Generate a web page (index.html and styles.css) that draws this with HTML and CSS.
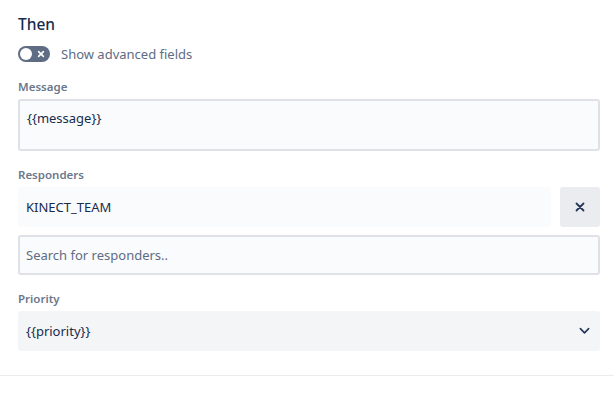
FILE: index.html
```html
<!DOCTYPE html>
<html lang="en">
<head>
  <meta charset="UTF-8" />
  <meta name="viewport" content="width=device-width, initial-scale=1.0" />
  <title>Then — action fields</title>
  <link rel="stylesheet" href="styles.css">
</head>
<body>
  <div class="panel">
    <h2 class="heading">Then</h2>

    <label class="toggle-row">
      <span class="toggle">
        <span class="toggle-knob"></span>
        <svg class="toggle-x" viewBox="0 0 10 10" xmlns="http://www.w3.org/2000/svg">
          <path d="M2 2l6 6M8 2l-6 6" stroke="#fff" stroke-width="2" stroke-linecap="round"/>
        </svg>
      </span>
      <span class="toggle-label">Show advanced fields</span>
    </label>

    <div class="field">
      <div class="field-label">Message</div>
      <div class="textarea">{{message}}</div>
    </div>

    <div class="field">
      <div class="field-label">Responders</div>
      <div class="responder-row">
        <div class="responder">KINECT_TEAM</div>
        <button class="icon-btn" aria-label="remove">
          <svg viewBox="0 0 12 12" xmlns="http://www.w3.org/2000/svg">
            <path d="M2.5 2.5l7 7M9.5 2.5l-7 7" stroke="#253858" stroke-width="1.8" stroke-linecap="round"/>
          </svg>
        </button>
      </div>
      <div class="search">Search for responders..</div>
    </div>

    <div class="field">
      <div class="field-label">Priority</div>
      <div class="select">
        <span>{{priority}}</span>
        <svg class="chevron" viewBox="0 0 12 8" xmlns="http://www.w3.org/2000/svg">
          <path d="M1.5 1.5l4.5 4.5 4.5-4.5" stroke="#253858" stroke-width="1.8" fill="none" stroke-linecap="round" stroke-linejoin="round"/>
        </svg>
      </div>
    </div>
  </div>
  <div class="divider"></div>
</body>
</html>
```

FILE: styles.css
```css
:root {
  --text: #172b4d;
  --subtle: #6b778c;
  --field: #fafbfc;
  --field-dark: #f4f5f7;
  --border: #dfe1e6;
}

html, body {
  margin: 0;
  padding: 0;
  background: #fff;
  color: var(--text);
  font-family: "Noto Sans", "Open Sans", sans-serif;
  font-size: 13px;
}

.panel {
  padding: 14px 14px 0 18px;
}

.heading {
  margin: 0;
  font-size: 15.5px;
  line-height: 20px;
  font-weight: 500;
}

/* Toggle */
.toggle-row {
  display: flex;
  align-items: center;
  gap: 11px;
  margin-top: 12px;
  height: 16px;
}
.toggle {
  position: relative;
  width: 32px;
  height: 16px;
  border-radius: 8px;
  background: #5e6c84;
  display: block;
}
.toggle-knob {
  position: absolute;
  left: 2px;
  top: 2px;
  width: 12px;
  height: 12px;
  border-radius: 50%;
  background: #fff;
}
.toggle-x {
  position: absolute;
  right: 5px;
  top: 4px;
  width: 8px;
  height: 8px;
}
.toggle-label {
  color: #5e6c84;
  font-size: 13px;
  line-height: 16px;
}

/* Fields */
.field {
  margin-top: 16px;
}
.field:first-of-type {
  margin-top: 17px;
}
.field-label {
  font-size: 11.5px;
  line-height: 16px;
  font-weight: 600;
  color: var(--subtle);
  margin-bottom: 4px;
}

.textarea {
  box-sizing: border-box;
  height: 52px;
  border: 2px solid var(--border);
  border-radius: 3px;
  background: var(--field);
  padding: 7px 7px;
  line-height: 20px;
}

.responder-row {
  display: flex;
  gap: 9px;
}
.responder {
  flex: 1;
  height: 40px;
  box-sizing: border-box;
  background: var(--field);
  border-radius: 3px;
  padding: 0 8px;
  display: flex;
  align-items: center;
}
.icon-btn {
  width: 40px;
  height: 40px;
  border: 0;
  border-radius: 3px;
  background: #ebecf0;
  display: flex;
  align-items: center;
  justify-content: center;
  padding: 0;
}
.icon-btn svg {
  width: 12px;
  height: 12px;
}

.search {
  margin-top: 8px;
  box-sizing: border-box;
  height: 40px;
  border: 2px solid var(--border);
  border-radius: 3px;
  background: var(--field);
  padding: 0 6px;
  display: flex;
  align-items: center;
  color: #5e6c84;
}

.select {
  box-sizing: border-box;
  height: 40px;
  border-radius: 3px;
  background: var(--field-dark);
  padding: 0 10px 0 8px;
  display: flex;
  align-items: center;
  justify-content: space-between;
}
.chevron {
  width: 11px;
  height: 8px;
}

.divider {
  margin-top: 24px;
  height: 1px;
  background: #ebecf0;
}
```
